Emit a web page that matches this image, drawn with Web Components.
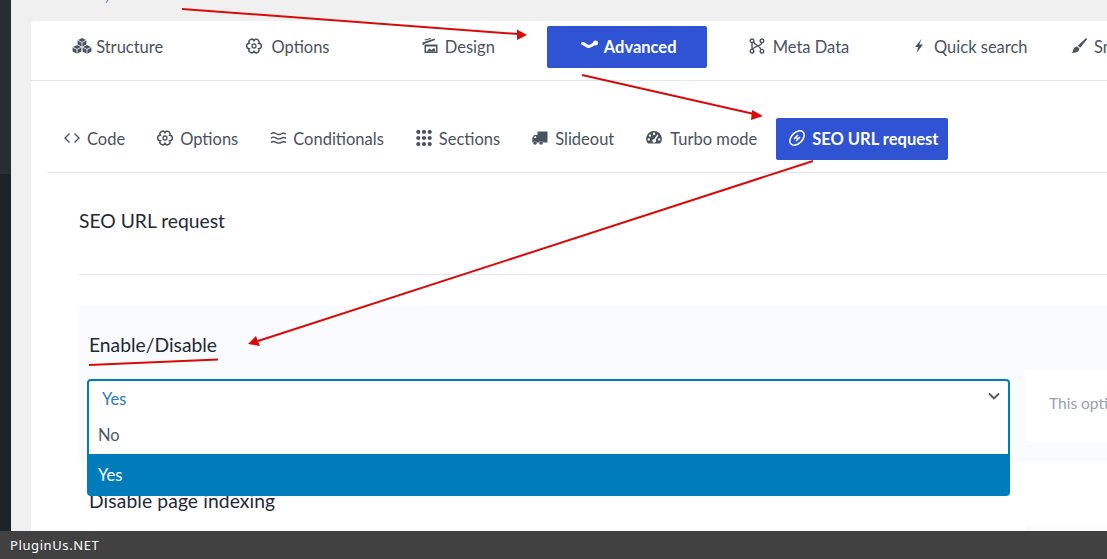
<!DOCTYPE html>
<html>
<head>
<meta charset="utf-8">
<style>
html, body { margin: 0; height: 559px; overflow: hidden; background: #f0f0f0; font-family: Lato, "Noto Sans", sans-serif; }
</style>
</head>
<body>
<settings-page>
  <nav-tabs slot="main">
    <tab-item icon="cubes" gap="4">Structure</tab-item>
    <tab-item icon="cog" gap="9">Options</tab-item>
    <tab-item icon="clap" gap="7">Design</tab-item>
    <tab-item icon="wave" gap="6" active>Advanced</tab-item>
    <tab-item icon="nodes" gap="8">Meta Data</tab-item>
    <tab-item icon="bolt" gap="7">Quick search</tab-item>
    <tab-item icon="brush" gap="7" class="last">Sm</tab-item>
  </nav-tabs>
  <sub-tabs slot="sub">
    <tab-item small icon="code">Code</tab-item>
    <tab-item small icon="cog">Options</tab-item>
    <tab-item small icon="water" gap="6">Conditionals</tab-item>
    <tab-item small icon="dots">Sections</tab-item>
    <tab-item small icon="truck">Slideout</tab-item>
    <tab-item small icon="gauge" gap="8">Turbo mode</tab-item>
    <tab-item small icon="link" active>SEO URL request</tab-item>
  </sub-tabs>
</settings-page>
<script>
function cube(cx, cy, r) {
  return `<path fill="currentColor" d="M${cx} ${cy - r}L${cx + r} ${cy - r / 2}V${cy + r / 2}L${cx} ${cy + r}L${cx - r} ${cy + r / 2}V${cy - r / 2}Z"/>` +
    `<path fill="none" stroke="#fff" stroke-width=".8" d="M${cx - r} ${cy - r / 2}L${cx} ${cy}L${cx + r} ${cy - r / 2}M${cx} ${cy}V${cy + r}"/>`;
}

function gearPath() {
  // six rounded lobes, like the outline cog in the tabs
  let d = '';
  for (let i = 0; i < 6; i++) {
    const a = (30 + 60 * i) * Math.PI / 180;
    const x = (8 + 5.4 * Math.cos(a)).toFixed(2);
    const y = (8 + 5.4 * Math.sin(a)).toFixed(2);
    d += (i === 0 ? 'M' : 'A2.7 2.7 0 0 1 ') + x + ' ' + y;
  }
  const a0 = 30 * Math.PI / 180;
  d += 'A2.7 2.7 0 0 1 ' + (8 + 5.4 * Math.cos(a0)).toFixed(2) + ' ' + (8 + 5.4 * Math.sin(a0)).toFixed(2) + 'Z';
  return d;
}

const ICONS = {
  cubes: [20, cube(10, 4.4, 4.4) + cube(5, 11.4, 4.4) + cube(15, 11.4, 4.4)],
  cog: [16, `<path fill="none" stroke="currentColor" stroke-width="1.5" d="${gearPath()}"/><circle cx="8" cy="8" r="2" fill="none" stroke="currentColor" stroke-width="1.3"/>`],
  clap: [16, '<path fill="currentColor" d="M2.5 6.5h13V15h-13z"/><path fill="#fff" d="M4 8.5h10v5H4z"/><path fill="currentColor" d="M5 13l2.500-2.500 2 1.500 2.500-2 1 1v2.500H5zM.5 4.500L12.500.5l.6 1.600L2 6l-.4 1H.5zM3 2.500L2.600 1.400 8.500 0l.4 1z"/>'],
  wave: [17, '<path fill="none" stroke="currentColor" stroke-width="3" stroke-linecap="round" d="M1.500 5.500c2.500.4 4 2.600 6 3 2 .3 3.500-1 5-2.300"/><circle cx="14.500" cy="5" r="2.500" fill="currentColor"/>'],
  nodes: [16, '<g fill="none" stroke="currentColor" stroke-width="1.4"><circle cx="3" cy="2.800" r="1.800"/><circle cx="13" cy="2.800" r="1.800"/><circle cx="3" cy="13.200" r="1.800"/><circle cx="13" cy="13.200" r="1.800"/><path d="M3 4.600v6.800M13 4.600c0 3.500-8.500 3.500-9.500 7M4.500 3.800c1 3.500 6.500 3.500 7.500 7.700"/></g>'],
  bolt: [16, '<path fill="currentColor" d="M10.500 1L4 9h3.200L5.500 15l6.500-8.500H8.300z"/>'],
  brush: [16, '<path fill="currentColor" d="M15.700.5c.4.300.3.900 0 1.300L9.200 9.800 6.800 7.800 14.300.8c.4-.4 1-.6 1.400-.3zM6.100 8.500l2.300 2c-.3 3-2.900 4.800-7.900 4 1.800-1 1.500-2.500 2.300-4 .7-1.200 2-1.900 3.300-2z"/>'],
  code: [16, '<path fill="none" stroke="currentColor" stroke-width="1.4" d="M5.500 3.500L1 8l4.500 4.500M10.500 3.500L15 8l-4.500 4.500"/>'],
  water: [17, '<path fill="none" stroke="currentColor" stroke-width="1.4" d="M1 4c1.500-1.500 3-1.500 4.700-.5s3.700 1.500 5.300.5 3.500-1 5 0M1 8.300c1.500-1.500 3-1.500 4.700-.5s3.700 1.500 5.300.5 3.500-1 5 0M1 12.600c1.500-1.500 3-1.500 4.700-.5s3.700 1.500 5.300.5 3.500-1 5 0"/>'],
  dots: [16, '<g fill="currentColor"><circle cx="2.300" cy="2" r="2.100"/><circle cx="8" cy="2" r="2.100"/><circle cx="13.700" cy="2" r="2.100"/><circle cx="2.300" cy="8" r="2.100"/><circle cx="8" cy="8" r="2.100"/><circle cx="13.700" cy="8" r="2.100"/><circle cx="2.300" cy="14" r="2.100"/><circle cx="8" cy="14" r="2.100"/><circle cx="13.700" cy="14" r="2.100"/></g>'],
  truck: [16, '<path fill="currentColor" d="M5.500 1.500h10v11h-4.300a2.300 2.300 0 0 0-4.200 0H5a2.300 2.300 0 0 0-4.200 0H.3V8l1.800-3h3.400z"/><circle cx="3" cy="13" r="1.800" fill="currentColor"/><circle cx="9.100" cy="13" r="1.800" fill="currentColor"/><path fill="#fff" d="M1.800 8l1-1.700h1.400V8z"/>'],
  gauge: [16, '<path fill="currentColor" fill-rule="evenodd" d="M8 1a7.800 7.800 0 0 1 6.700 11.800c-.2.400-.6.700-1.100.7H2.400c-.5 0-.9-.3-1.100-.7A7.800 7.800 0 0 1 8 1zM8 2.600a1.200 1.200 0 1 0 0 2.400 1.200 1.200 0 0 0 0-2.400zM4 4.400a1.200 1.200 0 1 0 0 2.400 1.200 1.200 0 0 0 0-2.400zM2.800 8.200a1.200 1.200 0 1 0 0 2.400 1.200 1.200 0 0 0 0-2.400zm10.400 0a1.200 1.200 0 1 0 0 2.400 1.200 1.200 0 0 0 0-2.400zM11.300 4.500L8.300 9a1.800 1.800 0 1 0 1.300.7l2.800-4.300z"/>'],
  link: [16, '<g fill="none" stroke="currentColor" stroke-width="1.5"><ellipse cx="8" cy="8" rx="8.5" ry="5.5" transform="rotate(-45 8 8)"/><path d="M5 9L9 5M7 11l4-4M6.500 6.500l3 3"/></g>']
};

const TEXT_FONT = 'Lato, "Noto Sans", sans-serif';

class SettingsPage extends HTMLElement {
  constructor() {
    super();
    this.attachShadow({ mode: 'open' });
    this.shadowRoot.innerHTML = `
      <style>
        :host { display: block; position: relative; height: 559px; overflow: hidden; }
        .wrap { display: flex; height: 531px; }
        .rail { width: 11px; background: linear-gradient(#262d33 0 174px, #1d2327 174px); flex: none; }
        .content { flex: 1; padding: 21px 0 0 20px; min-width: 0; }
        .card { background: #fff; border-radius: 4px 0 0 0; height: 510px; overflow: hidden; }
        .top { height: 59px; border-bottom: 1px solid #e3e6ec; }
        .inner { margin: 0 0 0 16px; }
        .sub { height: 91px; border-bottom: 1px solid #e3e6ec; }
        .body { padding: 0 0 0 32px; }
        h3, h4, .next { font: 400 19.3px/22px ${TEXT_FONT}; color: #1f2a36; }
        h3 { margin: 0; padding: 37px 0 42px; border-bottom: 1px solid #e3e6ec; }
        .row { background: #fafbfd; margin-top: 31px; height: 155px; position: relative; padding-left: 10px; }
        h4 { margin: 0; padding-top: 28px; height: 46px; }
        .hint { position: absolute; left: 946px; top: 63px; width: 200px; height: 72px; box-sizing: border-box; background: #fff; border-radius: 4px; padding: 24px 0 0 24px; font: 400 15.5px/20px ${TEXT_FONT}; color: #9aa0a8; white-space: nowrap; }
        .next { padding: 29px 0 0 10px; position: relative; letter-spacing: .1px; }
        .next-hint { position: absolute; left: 946px; top: 64px; width: 200px; height: 40px; background: #fafbfd; border-radius: 4px; }
      </style>
      <div class="wrap">
        <div class="rail"></div>
        <div class="content">
          <div class="card">
            <div class="top"><slot name="main"></slot></div>
            <div class="inner">
              <div class="sub"><slot name="sub"></slot></div>
              <div class="body">
                <h3>SEO URL request</h3>
                <div class="row">
                  <h4>Enable/Disable</h4>
                  <select-box></select-box>
                  <div class="hint">This option</div>
                </div>
                <div class="next">Disable page indexing<div class="next-hint"></div></div>
              </div>
            </div>
          </div>
        </div>
      </div>
      <drawn-arrows></drawn-arrows>
      <site-footer>PluginUs.NET</site-footer>
    `;
  }
}

class NavTabs extends HTMLElement {
  constructor() {
    super();
    this.attachShadow({ mode: 'open' });
    this.shadowRoot.innerHTML = `
      <style>
        :host { display: grid; grid-template-columns: repeat(7, 170.33px); padding-top: 5px; height: 42px; white-space: nowrap; }
        ::slotted(tab-item) { margin: 0 5px; padding-left: 3px; }
        ::slotted(tab-item.last) { justify-content: flex-start; padding-left: 13px; }
      </style>
      <slot></slot>
    `;
  }
}

class SubTabs extends HTMLElement {
  constructor() {
    super();
    this.attachShadow({ mode: 'open' });
    this.shadowRoot.innerHTML = `
      <style>
        :host { display: flex; padding: 37px 0 0 4px; white-space: nowrap; height: 42px; }
        ::slotted(tab-item) { margin-right: 10px; padding: 0 9px 0 13px; }
        ::slotted(tab-item[active]) { padding-right: 10px; }
      </style>
      <slot></slot>
    `;
  }
}

class TabItem extends HTMLElement {
  constructor() {
    super();
    this.attachShadow({ mode: 'open' });
    const [w, icon] = ICONS[this.getAttribute('icon')] || [16, ''];
    const gap = this.getAttribute('gap') || 7;
    this.shadowRoot.innerHTML = `
      <style>
        :host { display: flex; align-items: center; justify-content: center; gap: ${gap}px; height: 42px; border-radius: 2px; color: #4a5260; font: 400 16.5px ${TEXT_FONT}; }
        :host([active]) { background: #3053d4; color: #fff; font-weight: 700; }
        svg { height: 16px; flex: none; position: relative; top: -1px; }
      </style>
      <svg width="${w}" viewBox="0 0 ${w} 16">${icon}</svg><span><slot></slot></span>
    `;
  }
}

class SelectBox extends HTMLElement {
  constructor() {
    super();
    this.attachShadow({ mode: 'open' });
    this.shadowRoot.innerHTML = `
      <style>
        :host { display: block; position: absolute; left: 8px; top: 73px; width: 923px; height: 117px; box-sizing: border-box; border: 2px solid #007cba; border-radius: 4px; background: #fff; font: 400 16.5px ${TEXT_FONT}; z-index: 2; }
        .cur { height: 35px; line-height: 36px; padding-left: 13px; color: #2b7cb8; position: relative; }
        .cur svg { position: absolute; right: 8px; top: 11px; }
        .no { height: 38px; line-height: 38px; padding-left: 9px; color: #50575e; }
        .yes { height: 40px; line-height: 42px; background: #007cba; color: #fff; margin: 0 -2px -2px; border-radius: 0 0 4px 4px; padding-left: 11px; }
      </style>
      <div class="cur">Yes<svg width="12" height="8" viewBox="0 0 12 8"><path d="M1 1.500l5 5 5-5" fill="none" stroke="#555" stroke-width="1.8"/></svg></div>
      <div class="no">No</div>
      <div class="yes">Yes</div>
    `;
  }
}

class DrawnArrows extends HTMLElement {
  constructor() {
    super();
    this.attachShadow({ mode: 'open' });
    this.shadowRoot.innerHTML = `
      <style>
        :host { position: absolute; inset: 0; pointer-events: none; z-index: 5; }
        svg { display: block; }
      </style>
      <svg width="1107" height="559" viewBox="0 0 1107 559">
        <path d="M106 3L108 0" stroke="#5b7fb5" stroke-width="1" fill="none"/>
        <g stroke="#d90a0a" stroke-width="2" fill="none">
          <path d="M182 9L518 34"/>
          <path d="M582 75L754 114"/>
          <path d="M813 161L258 341"/>
          <path d="M89 365L218 359.5"/>
        </g>
        <g fill="#d90a0a">
          <path d="M527 35L517 29.5 517 40z"/>
          <path d="M763 116L752 110 751 120z"/>
          <path d="M248 344L256 336 260 346z"/>
        </g>
      </svg>
    `;
  }
}

class SiteFooter extends HTMLElement {
  constructor() {
    super();
    this.attachShadow({ mode: 'open' });
    this.shadowRoot.innerHTML = `
      <style>
        :host { position: absolute; left: 0; right: 0; bottom: 0; height: 28px; background: #414141; color: #fff; font: 400 13px/28px "Noto Sans", sans-serif; letter-spacing: .6px; padding-left: 10px; z-index: 6; }
      </style>
      <slot></slot>
    `;
  }
}

customElements.define('settings-page', SettingsPage);
customElements.define('nav-tabs', NavTabs);
customElements.define('sub-tabs', SubTabs);
customElements.define('tab-item', TabItem);
customElements.define('select-box', SelectBox);
customElements.define('drawn-arrows', DrawnArrows);
customElements.define('site-footer', SiteFooter);
</script>
</body>
</html>
